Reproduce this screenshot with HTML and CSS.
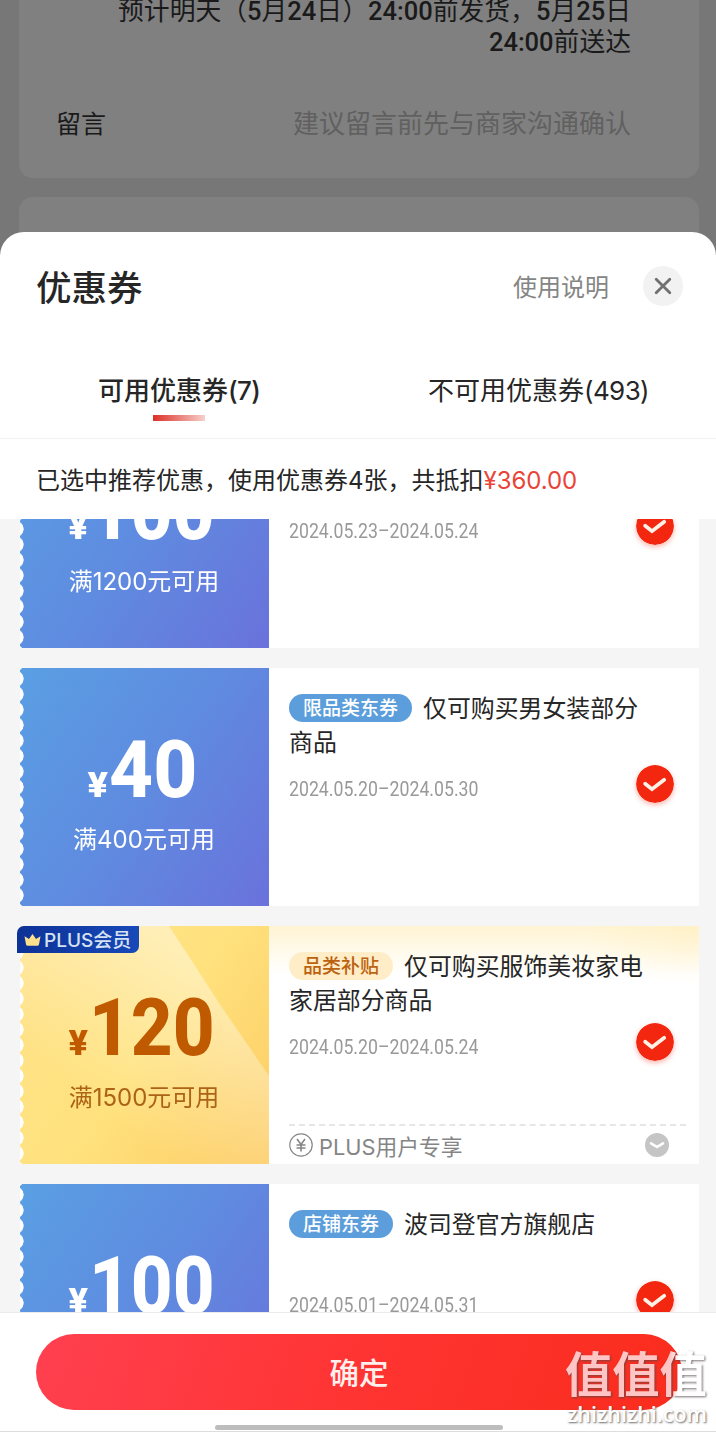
FILE: index.html
```html
<!DOCTYPE html>
<html lang="zh-CN">
<head>
<meta charset="utf-8">
<title>优惠券</title>
<link rel="stylesheet" href="styles.css">
</head>
<body>
<svg class="defs" width="0" height="0">
  <symbol id="check" viewBox="0 0 38 38"><circle cx="19" cy="19" r="19" fill="#f3270f"/><path d="M9.2 18.8 L16 24.2 L28.2 14.8" fill="none" stroke="#fff1e6" stroke-width="3.8" stroke-linecap="round" stroke-linejoin="miter"/></symbol>
</svg>
<div class="screen">
  <div class="order">
    <section class="order-card">
      <p class="delivery">预计明天（<b>5</b>月<b>24</b>日）<b>24:00</b>前发货，<b>5</b>月<b>25</b>日<br><b>24:00</b>前送达</p>
      <div class="message"><span>留言</span><span class="hint">建议留言前先与商家沟通确认</span></div>
    </section>
    <section class="order-card next"></section>
  </div>

  <main class="sheet">
    <header class="head">
      <h1>优惠券</h1>
      <span class="help">使用说明</span>
      <span class="close"><svg width="18" height="18" viewBox="0 0 18 18"><path d="M2.2 2.2 L15.8 15.8 M15.8 2.2 L2.2 15.8" stroke="#707070" stroke-width="2.8" stroke-linecap="round"/></svg></span>
    </header>
    <nav class="tabs">
      <div class="tab active">可用优惠券<span>(7)</span></div>
      <div class="tab">不可用优惠券<span>(493)</span></div>
    </nav>
    <p class="summary">已选中推荐优惠，使用优惠券4张，共抵扣<span>¥360.00</span></p>

    <div class="list">
      <article class="coupon">
        <div class="value"><div class="amount"><i>¥</i><b>100</b></div><div class="rule">满<span>1200</span>元可用</div></div>
        <div class="info"><div class="title"></div><div class="date"><span>2024.05.23–2024.05.24</span></div></div>
        <svg class="check"><use href="#check"/></svg>
      </article>
      <article class="coupon">
        <div class="value"><div class="amount wide"><i>¥</i><b>40</b></div><div class="rule">满<span>400</span>元可用</div></div>
        <div class="info"><div class="title"><span class="tag">限品类东券</span>仅可购买男女装部分<br>商品</div><div class="date"><span>2024.05.20–2024.05.30</span></div></div>
        <svg class="check"><use href="#check"/></svg>
      </article>
      <article class="coupon plus">
        <div class="value">
          <svg class="shine" width="249" height="238" viewBox="0 0 249 238"><defs><linearGradient id="sh" x1="0.75" y1="0.2" x2="0.3" y2="0.75"><stop offset="0" stop-color="#fff" stop-opacity=".42"/><stop offset="1" stop-color="#fff" stop-opacity="0"/></linearGradient></defs><path d="M0 0 H149 L201 80 L249 150 V238 H0Z" fill="url(#sh)"/></svg>
          <div class="amount"><i>¥</i><b>120</b></div><div class="rule">满<span>1500</span>元可用</div>
        </div>
        <div class="info">
          <div class="title"><span class="tag">品类补贴</span>仅可购买服饰美妆家电<br>家居部分商品</div><div class="date"><span>2024.05.20–2024.05.24</span></div>
          <div class="extra">
            <svg width="24" height="24" viewBox="0 0 24 24" fill="none" stroke="#858585"><circle cx="12" cy="12" r="11.2" stroke-width="1.2"/><path d="M8 6 L12 11.5 L16 6 M12 11.5 V18.5 M7.5 12 H16.5 M7.5 15 H16.5" stroke-width="1.6"/></svg>
            <span>PLUS用户专享</span>
            <svg class="more" width="24" height="24" viewBox="0 0 24 24"><circle cx="12" cy="12" r="12" fill="#c5c5c5"/><path d="M6 10.3 L12 14 L18 10.3" fill="none" stroke="#fff" stroke-width="2.6" stroke-linecap="round" stroke-linejoin="round"/></svg>
          </div>
        </div>
        <svg class="check"><use href="#check"/></svg>
        <div class="badge"><svg width="17" height="14" viewBox="0 0 17 14"><path d="M0.5 3.2 L5 6 L8.5 1 L12 6 L16.5 3.2 L15 11.2 Q14.8 12.8 13.2 12.8 H3.8 Q2.2 12.8 2 11.2Z" fill="#ffe08c"/></svg><span>PLUS会员</span></div>
      </article>
      <article class="coupon">
        <div class="value"><div class="amount"><i>¥</i><b>100</b></div><div class="rule"></div></div>
        <div class="info"><div class="title"><span class="tag">店铺东券</span>波司登官方旗舰店</div><div class="date"><span>2024.05.01–2024.05.31</span></div></div>
        <svg class="check"><use href="#check"/></svg>
      </article>
    </div>

    <footer class="foot">
      <div class="confirm">确定</div>
      <div class="homebar"></div>
    </footer>
  </main>
  <div class="watermark"><span class="wm-name">值值值</span><span class="wm-site">zhizhizhi.com</span></div>
</div>
</body>
</html>
```
FILE: styles.css
```css
* { box-sizing: border-box; }
body {
  margin: 0;
  font-family: Inter, "Noto Sans CJK SC", sans-serif;
  color: #262626;
}
h1, p { margin: 0; }
.defs { position: absolute; }
.screen {
  position: relative;
  width: 716px;
  height: 1432px;
  overflow: hidden;
  display: flex;
  flex-direction: column;
  background: #fff;
}

/* dimmed order page behind the sheet */
.order {
  height: 256px;
  flex: none;
  padding: 0 17px 0 19px;
  background: #777;
  overflow: hidden;
  color: #1a1a1a;
}
.order-card {
  height: 178px;
  padding: 0 68px 0 37px;
  background: #808080;
  border-radius: 0 0 14px 14px;
}
.order-card.next { margin-top: 19px; height: 80px; border-radius: 14px 14px 0 0; }
.delivery {
  margin-top: -7px;
  height: 64px;
  float: right;
  font: 25.8px/31px "Noto Sans CJK SC", sans-serif;
  text-align: right;
  white-space: nowrap;
}
.delivery b { font-family: Roboto, sans-serif; font-weight: 500; font-size: 25.5px; line-height: 20px; }
.message {
  clear: both;
  display: flex;
  justify-content: space-between;
  padding-top: 49px;
  font-size: 26px;
  line-height: 36px;
}
.message span:first-child { font-size: 25px; }
.hint { color: #606060; }

.sheet {
  position: relative;
  margin-top: -24px;
  flex: 1;
  display: flex;
  flex-direction: column;
  background: #fff;
  border-radius: 24px 24px 0 0;
}
.head {
  height: 110px;
  flex: none;
  display: flex;
  align-items: center;
  padding: 0 33px 2px 36px;
}
.head h1 { flex: 1; padding-top: 6px; font-size: 35.5px; font-weight: 500; line-height: 50px; }
.help { font-size: 24px; line-height: 36px; padding-top: 3px; color: #858585; margin-right: 34px; }
.close {
  width: 40px;
  height: 40px;
  border-radius: 50%;
  background: #f2f2f2;
  display: flex;
  align-items: center;
  justify-content: center;
}
.tabs {
  height: 97px;
  flex: none;
  display: grid;
  grid-template-columns: 1fr 1fr;
  border-bottom: 1px solid #f1f1f1;
}
.tab {
  padding-top: 31px;
  text-align: center;
  font-size: 26px;
  line-height: 36px;
}
.tab + .tab { padding-left: 3px; }
.tab span { letter-spacing: -0.6px; }
.active { font-weight: 500; }
.active::after {
  content: "";
  display: block;
  width: 52px;
  height: 6px;
  margin: 6px auto 0;
  background: linear-gradient(90deg, #dc3026, #f7cfcb);
}
.summary {
  height: 80px;
  flex: none;
  padding-left: 36px;
  font-size: 24px;
  line-height: 84px;
  white-space: nowrap;
}
.summary span { color: #ea4438; letter-spacing: -0.05px; }

.list {
  height: 793px;
  flex: none;
  overflow: hidden;
  padding: 0 17px 0 20px;
  background: #f5f5f6;
  display: flex;
  flex-direction: column;
  gap: 20px;
}
.coupon {
  position: relative;
  flex: none;
  height: 238px;
  display: flex;
  background: #fff;
}
.coupon:first-child { margin-top: -109px; }
.value {
  width: 249px;
  position: relative;
  padding-top: 57px;
  color: #fff;
  background: linear-gradient(125deg, #5a9fe3, #5f8be0 50%, #6a72db);
  -webkit-mask: radial-gradient(circle 8.2px at -4.4px 7.73px, transparent 7.7px, #000 8.3px) 0 3px / 100% 15.47px repeat-y;
  mask: radial-gradient(circle 8.2px at -4.4px 7.73px, transparent 7.7px, #000 8.3px) 0 3px / 100% 15.47px repeat-y;
}
.amount {
  position: relative;
  display: flex;
  justify-content: center;
  align-items: baseline;
  height: 90px;
  line-height: 90px;
  font-family: Roboto, sans-serif;
  transform: scaleX(.92);
  padding-right: 5px;
}
.amount.wide { transform: scaleX(.97); padding-right: 3px; }
.amount i {
  font-size: 35px;
  font-style: normal;
  font-weight: 900;
  margin-right: 2px;
  transform: scaleX(1.12);
}
.amount b { font-size: 79px; font-weight: 800; }
.rule {
  position: relative;
  margin-top: 7px;
  padding-right: 1px;
  text-align: center;
  font-size: 24px;
  line-height: 36px;
}
.info { flex: 1; padding: 23px 0 0 20px; }
.title {
  height: 68px;
  padding-top: 1px;
  font-size: 23.9px;
  line-height: 34px;
  white-space: nowrap;
}
.tag {
  display: inline-block;
  vertical-align: top;
  height: 28px;
  margin: 2px 11px 0 0;
  padding: 0 14px;
  border-radius: 14px;
  background: #5b9edb;
  color: #fff;
  font-size: 19px;
  font-weight: 500;
  line-height: 29px;
}
.date {
  margin-top: 12px;
  height: 36px;
  line-height: 36px;
  font-family: Roboto, sans-serif;
  font-size: 21px;
  color: #999;
}
.date span { display: inline-block; transform: scaleX(.843); transform-origin: left; }
.check {
  position: absolute;
  right: 25px;
  top: 97px;
  width: 38px;
  height: 38px;
  border-radius: 50%;
  box-shadow: 0 2px 5px rgba(243, 39, 15, .35);
}

/* member coupon */
.plus { background: radial-gradient(ellipse 120px 60px at 100% 0, rgba(255, 238, 190, .55), rgba(255, 238, 190, 0)), linear-gradient(180deg, #fff4d3, #fff 48px); }
.plus .value {
  color: #c05a00;
  background: linear-gradient(125deg, #ffe28a, #ffe27e 50%, #fdcb62);
}
.plus .rule { color: #ad6316; }
.shine { position: absolute; left: 0; top: 0; }
.plus .tag { background: #ffedc8; color: #bb620f; }
.extra {
  display: flex;
  align-items: center;
  margin: 59px 13px 0 0;
  height: 40px;
  border-top: 2px dashed #e6e6e6;
  color: #858585;
  font-size: 21.8px;
}
.extra span { flex: 1; margin-left: 6px; }
.more { margin-right: 17px; }
.badge {
  position: absolute;
  left: -3px;
  top: 0;
  width: 122px;
  height: 27px;
  padding-left: 7px;
  display: flex;
  align-items: center;
  border-radius: 7px 0 7px 0;
  background: linear-gradient(90deg, #0d3297, #1749b8);
  color: #d6e2f2;
  font-size: 19px;
  font-weight: 500;
  line-height: 29px;
}
.badge span { margin-left: 3px; padding-top: 2px; white-space: nowrap; }

.foot {
  flex: 1;
  padding: 21px 34px 0 36px;
  border-top: 1px solid #ececec;
  border-bottom: 1px solid #ddd;
  background: #fff;
}
.confirm {
  height: 76px;
  border-radius: 38px;
  background: linear-gradient(110deg, #ff4050, #ff3535 45%, #fa2c1c);
  color: #fff0ee;
  font-size: 29.5px;
  font-weight: 500;
  line-height: 78px;
  text-align: center;
}
.homebar {
  width: 288px;
  height: 5px;
  margin: 15px auto 0;
  border-radius: 3px;
  background: #bdbdbd;
}
.watermark {
  position: absolute;
  left: 565px;
  top: 1350px;
  display: flex;
  flex-direction: column;
  white-space: nowrap;
}
.wm-name {
  font-size: 47.3px;
  font-weight: 700;
  line-height: 50px;
  background: linear-gradient(90deg, #ffc4c4 74%, #fff 80%);
  -webkit-background-clip: text;
  background-clip: text;
  color: transparent;
  filter: drop-shadow(1px 1px 1px rgba(80, 70, 70, .75));
}
.wm-site {
  color: #fff;
  font-family: "Open Sans", sans-serif;
  font-size: 21.5px;
  font-weight: 600;
  line-height: 28px;
  margin-left: 2px;
  text-shadow: 1px 1px 2px rgba(80, 80, 80, .85);
}
```
